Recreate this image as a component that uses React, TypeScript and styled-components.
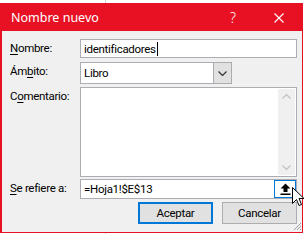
import styled, { createGlobalStyle } from 'styled-components';

const GlobalStyle = createGlobalStyle`
  html, body {
    margin: 0;
    padding: 0;
    background: #ffffff;
  }
  * {
    box-sizing: border-box;
  }
`;

const RED = '#e81123';
const FONT = `Roboto, 'Liberation Sans', sans-serif`;

const Page = styled.div`
  position: relative;
  width: 304px;
  height: 234px;
  overflow: hidden;
  padding-top: 3px;
  background: linear-gradient(#d4d4d4, #d4d4d4) 105px 0 / 1px 100% no-repeat, #ffffff;
  font-family: ${FONT};
  font-size: 11.5px;
  letter-spacing: -0.3px;
  color: #000;
`;

const Dialog = styled.div`
  width: 303px;
  height: 230px;
  border: 1px solid ${RED};
  border-left-width: 2px;
  background: #f0f0f0;
  display: flex;
  flex-direction: column;
`;

const TitleBar = styled.div`
  height: 27px;
  background: ${RED};
  color: #fff;
  display: flex;
  align-items: center;
  padding-left: 9px;
  font-family: 'Noto Sans', sans-serif;
  font-size: 12.5px;
  letter-spacing: 0;
`;

const Title = styled.span`
  flex: 1;
`;

const TitleButton = styled.span`
  width: 46px;
  height: 27px;
  display: flex;
  align-items: center;
  justify-content: center;
  font-size: 14px;
  font-weight: 300;
`;

const Body = styled.div`
  flex: 1;
  padding: 8px 5px 0 8px;
  display: flex;
  flex-direction: column;
  position: relative;
`;

const Row = styled.div<{ $mt?: number; $h: number }>`
  display: grid;
  grid-template-columns: 70px 1fr;
  margin-top: ${(p) => p.$mt ?? 0}px;
  height: ${(p) => p.$h}px;
`;

const Label = styled.label`
  line-height: 14px;
  padding-top: 2px;
  white-space: nowrap;
  u {
    text-decoration: underline;
    text-underline-offset: 2px;
  }
`;

const Field = styled.div`
  position: relative;
  border: 1px solid #abadb3;
  background: #fff;
  display: flex;
  align-items: center;
  padding-left: 3px;
`;

const Caret = styled.span`
  display: inline-block;
  width: 1px;
  height: 14px;
  background: #000;
  margin-left: 1px;
  vertical-align: middle;
`;

const SelectWrap = styled.div`
  display: flex;
  width: 152px;
`;

const SelectBox = styled(Field)`
  flex: 1;
`;

const DropButton = styled.div`
  width: 18px;
  background: #e1e1e1;
  border: 1px solid #acacac;
  border-left: none;
  display: flex;
  align-items: center;
  justify-content: center;
`;

const TextArea = styled.div`
  border: 1px solid #abadb3;
  background: #fff;
  display: flex;
  justify-content: flex-end;
  padding: 1px;
`;

const ScrollBar = styled.div`
  width: 17px;
  background: #f0f0f0;
  display: flex;
  flex-direction: column;
  justify-content: space-between;
  align-items: center;
  padding: 5px 0;
`;

const RefButton = styled.div`
  position: absolute;
  right: 0;
  top: 0;
  width: 22px;
  height: 18px;
  border: 1px solid #0078d7;
  background: #fff;
  display: flex;
  align-items: center;
  justify-content: center;
`;

const ButtonRow = styled.div`
  display: flex;
  justify-content: flex-end;
  gap: 9px;
  margin-top: 3px;
`;

const Button = styled.div<{ $default?: boolean }>`
  width: 75px;
  height: 22px;
  background: #e1e1e1;
  border: ${(p) => (p.$default ? '2px solid #0078d7' : '1px solid #adadad')};
  display: flex;
  align-items: center;
  justify-content: center;
`;

const Cursor = styled.svg`
  position: absolute;
  left: 292px;
  top: 187px;
`;

const Grip = styled.svg`
  position: absolute;
  left: 293px;
  top: 222px;
`;

const Chevron = ({ up, color }: { up?: boolean; color: string }) => (
  <svg width="9" height="5" viewBox="0 0 9 5">
    <path d={up ? 'M0.5 4.5 L4.5 0.5 L8.5 4.5' : 'M0.5 0.5 L4.5 4.5 L8.5 0.5'} fill="none" stroke={color} strokeWidth="1.2" />
  </svg>
);

const App = () => (
  <Page>
    <GlobalStyle />
    <Dialog>
      <TitleBar>
        <Title>Nombre nuevo</Title>
        <TitleButton>?</TitleButton>
        <TitleButton>
          <svg width="10" height="10" viewBox="0 0 10 10">
            <path d="M0.5 0.5 L9.5 9.5 M9.5 0.5 L0.5 9.5" stroke="#fff" strokeWidth="1.1" />
          </svg>
        </TitleButton>
      </TitleBar>
      <Body>
        <Row $h={19}>
          <Label>
            <u>N</u>ombre:
          </Label>
          <Field>
            identificadores
            <Caret />
          </Field>
        </Row>
        <Row $mt={4} $h={22}>
          <Label>
            Ám<u>b</u>ito:
          </Label>
          <SelectWrap>
            <SelectBox>Libro</SelectBox>
            <DropButton>
              <Chevron color="#333" />
            </DropButton>
          </SelectWrap>
        </Row>
        <Row $mt={3} $h={90}>
          <Label>
            C<u>o</u>mentario:
          </Label>
          <TextArea>
            <ScrollBar>
              <Chevron up color="#c2c2c2" />
              <Chevron color="#c2c2c2" />
            </ScrollBar>
          </TextArea>
        </Row>
        <Row $mt={2} $h={20}>
          <Label>
            <u>S</u>e refiere a:
          </Label>
          <Field>
            =Hoja1!$E$13
            <RefButton>
              <svg width="11" height="12" viewBox="0 0 11 12">
                <path d="M5.5 0.5 L10.5 5.5 L7.5 5.5 L7.5 9 L3.5 9 L3.5 5.5 L0.5 5.5 Z" fill="#000" />
                <rect x="0.5" y="10.5" width="10" height="1.5" fill="#000" />
              </svg>
            </RefButton>
          </Field>
        </Row>
        <ButtonRow>
          <Button $default>Aceptar</Button>
          <Button>Cancelar</Button>
        </ButtonRow>
      </Body>
    </Dialog>
    <Grip width="9" height="9" viewBox="0 0 9 9">
      <path d="M8 1 L1 8 M8 4 L4 8 M8 7 L7 8" stroke="#a0a0a0" strokeWidth="1" />
    </Grip>
    <Cursor width="13" height="21" viewBox="0 0 13 21">
      <path
        d="M0.5 0.5 L0.5 16.5 L4.5 12.5 L7 18.5 L9.5 17.5 L7 11.5 L12 11.5 Z"
        fill="#fff"
        stroke="#000"
        strokeWidth="1"
        strokeLinejoin="round"
      />
    </Cursor>
  </Page>
);

export default App;
